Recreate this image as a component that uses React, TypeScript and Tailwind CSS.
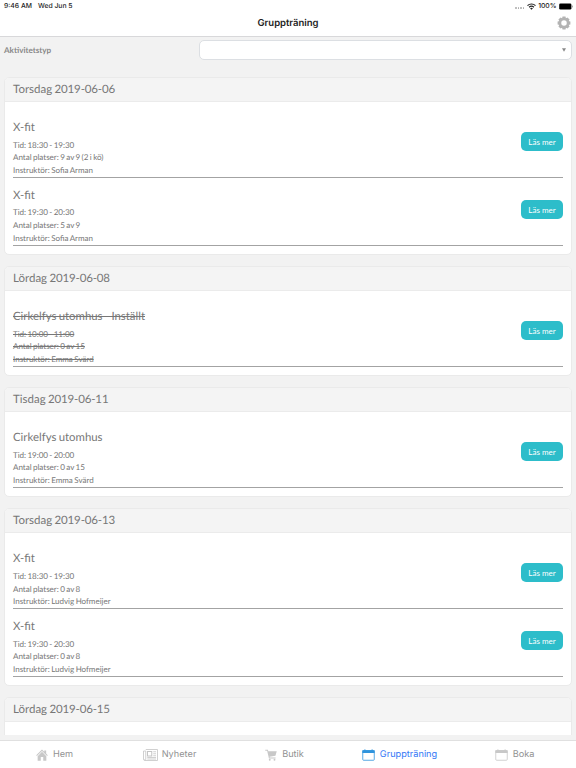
import React from "react";

interface Activity {
  name: string;
  time: string;
  spots: string;
  instructor: string;
  cancelled?: boolean;
}

interface Day {
  title: string;
  items: Activity[];
}

const days: Day[] = [
  {
    title: "Torsdag 2019-06-06",
    items: [
      { name: "X-fit", time: "18:30 - 19:30", spots: "9 av 9 (2 i kö)", instructor: "Sofia Arman" },
      { name: "X-fit", time: "19:30 - 20:30", spots: "5 av 9", instructor: "Sofia Arman" },
    ],
  },
  {
    title: "Lördag 2019-06-08",
    items: [
      { name: "Cirkelfys utomhus - Inställt", time: "10:00 - 11:00", spots: "0 av 15", instructor: "Emma Svärd", cancelled: true },
    ],
  },
  {
    title: "Tisdag 2019-06-11",
    items: [{ name: "Cirkelfys utomhus", time: "19:00 - 20:00", spots: "0 av 15", instructor: "Emma Svärd" }],
  },
  {
    title: "Torsdag 2019-06-13",
    items: [
      { name: "X-fit", time: "18:30 - 19:30", spots: "0 av 8", instructor: "Ludvig Hofmeijer" },
      { name: "X-fit", time: "19:30 - 20:30", spots: "0 av 8", instructor: "Ludvig Hofmeijer" },
    ],
  },
  { title: "Lördag 2019-06-15", items: [] },
];

function WifiIcon() {
  return (
    <svg width="9" height="7" viewBox="0 0 18 14" fill="none" stroke="#222" strokeWidth="2.4">
      <path d="M1 5.2a11.5 11.5 0 0 1 16 0" />
      <path d="M4.2 8.4a7 7 0 0 1 9.6 0" />
      <path d="M9 13.6 6.2 10.8a4 4 0 0 1 5.6 0Z" fill="#222" stroke="none" />
    </svg>
  );
}

function BatteryIcon() {
  return (
    <svg width="14" height="7" viewBox="0 0 14 7">
      <rect x="0.2" y="0.5" width="12.2" height="6" rx="1.3" fill="#000" />
      <path d="M13 2.3c.9.3.9 2.1 0 2.4Z" fill="#777" />
    </svg>
  );
}

function GearIcon() {
  return (
    <svg width="14" height="14" viewBox="-14 -14 28 28" fill="#b3b3b3">
      {[0, 45, 90, 135].map((angle) => (
        <path key={angle} d="M-4-8.5 -3-12.8h6l1 4.3ZM-4 8.5l1 4.3h6l1-4.3Z" transform={`rotate(${angle})`} />
      ))}
      <circle r="8" fill="none" stroke="#b3b3b3" strokeWidth="5" />
    </svg>
  );
}

function HomeIcon() {
  return (
    <svg width="12" height="12" viewBox="0 0 24 24" fill="#c8c8c8">
      <path d="M12 .8 16.5 5.3V2.8h3.8v6.3l3.3 3.3-1.5 1.5L12 3.8 1.9 13.9.4 12.4Z" />
      <path d="M12 5.6 20.7 14.3V23.4h-6.2v-7.2h-5v7.2H3.3v-9.1Z" />
    </svg>
  );
}

function NewsIcon() {
  return (
    <svg width="15" height="12" viewBox="0 0 30 24" fill="none" stroke="#c4c4c4" strokeWidth="1.6">
      <path d="M5.5 1h23.5v22H4a3 3 0 0 1-3-3V4h4.5v16a1.5 1.5 0 0 1-3 1" />
      <rect x="9" y="5" width="8.5" height="9" strokeWidth="2" />
      <path d="M20.5 5.5h5.5M20.5 9.5h5.5M20.5 13.5h5.5M8.5 17h17.5M8.5 20h17.5" />
    </svg>
  );
}

function CartIcon() {
  return (
    <svg width="12" height="12" viewBox="0 0 24 24" fill="#c8c8c8">
      <path d="M.5 1.5h5.3l.8 2.8h16.9l-2.6 9.2L9 15.3l.4 1.6h11.8v1.9H7.9L4.3 3.4H.5Z" />
      <circle cx="9.5" cy="21.4" r="1.9" />
      <circle cx="19" cy="21.4" r="1.9" />
    </svg>
  );
}

function CalendarIcon({ color }: { color: string }) {
  return (
    <svg width="13" height="12" viewBox="0 0 26 24" fill={color}>
      <rect x="1.5" y="3" width="23" height="19.5" rx="1.5" fill="none" stroke={color} strokeWidth="1.6" />
      <path d="M.7 2.5H4.5V.8H7v1.7h12V.8h2.5v1.7h3.8V8H.7Z" />
    </svg>
  );
}

function ActivityRow({ item }: { item: Activity }) {
  return (
    <div className="flex h-[67.8px] items-center justify-between border-b border-[#a3a3a3]">
      <div className={`pt-[9px] ${item.cancelled ? "line-through" : ""}`}>
        {/* no letter spacing here, it would break the fi ligature */}
        <h3 className="text-[11.4px] leading-[18px]">{item.name}</h3>
        <div className="pt-[1.5px] text-[8.1px] leading-[12.7px]">
          <p className="tracking-[-0.06px]">Tid: {item.time}</p>
          <p className="tracking-[-0.04px]">Antal platser: {item.spots}</p>
          <p className="text-[8px]">Instruktör: {item.instructor}</p>
        </div>
      </div>
      <button className="mb-[4px] h-[19px] w-[42px] rounded-[5px] bg-[#2dbdca] pt-px text-[8px] text-white">Läs mer</button>
    </div>
  );
}

function DayCard({ day }: { day: Day }) {
  const [weekday, date] = day.title.split(" ");
  return (
    <section className="mb-[11.2px] overflow-hidden rounded-[5px] border border-[#eaeaea] bg-white">
      <h2 className="h-[24px] border-b border-[#ebebeb] bg-[#f4f4f4] px-2 text-[11.5px] leading-[23px]">
        {weekday} <span className="tracking-[-0.15px]">{date}</span>
      </h2>
      <div className="min-h-[40px] px-2 pt-[8px] pb-[8.2px]">
        {day.items.map((item) => (
          <ActivityRow key={item.time} item={item} />
        ))}
      </div>
    </section>
  );
}

export default function App() {
  return (
    <div className="flex h-[768px] w-[576px] flex-col overflow-hidden bg-[#f2f2f2] font-[Lato,sans-serif] text-[#777] [text-rendering:geometricPrecision]">
      <header className="h-[37px] shrink-0 border-b border-[#d8d8da] bg-white font-[Inter,sans-serif] text-[#222]">
        <div className="flex h-3 items-center justify-between pr-[3px] pl-1 text-[6.8px] font-medium">
          <div className="flex gap-[6px]">
            <span>9:46 AM</span>
            <span>Wed Jun 5</span>
          </div>
          <div className="flex items-center gap-[2.5px]">
            <span className="flex gap-[1px] pt-[4px]">
              {[0, 1, 2, 3].map((dot) => (
                <i key={dot} className="size-[1.5px] rounded-full bg-[#aaa]" />
              ))}
            </span>
            <WifiIcon />
            <span>100%</span>
            <BatteryIcon />
          </div>
        </div>
        <div className="grid h-[22px] grid-cols-[1fr_auto_1fr] items-center">
          <span />
          <h1 className="pt-[3px] text-[9.5px] font-semibold">Gruppträning</h1>
          <span className="flex justify-end pr-[5px]">
            <GearIcon />
          </span>
        </div>
      </header>

      <div className="flex h-[40px] shrink-0 items-start pr-1 pl-1">
        <label className="w-[195px] pt-[7px] text-[8.1px] leading-[13px] font-bold text-[#888]">Aktivitetstyp</label>
        <div className="mt-[3px] flex h-5 flex-1 items-center justify-end rounded-[5px] border border-[#dcdfe3] bg-white pr-[5px]">
          <svg width="4" height="4" viewBox="0 0 4 4">
            <path d="M0 .3h4L2 3.8Z" fill="#888" />
          </svg>
        </div>
      </div>

      <main className="h-[658px] shrink-0 overflow-hidden px-1 [word-spacing:-0.6px]">
        {days.map((day) => (
          <DayCard key={day.title} day={day} />
        ))}
      </main>

      <nav className="mt-[5px] h-[28px] shrink-0 border-t border-[#e0e0e0] bg-white font-[Inter,sans-serif] text-[9.2px] text-[#929292]">
        <div className="-ml-[3px] grid h-full w-[575px] grid-cols-5">
          <div className="flex items-center justify-center gap-[5px]">
            <HomeIcon />
            <span>Hem</span>
          </div>
          <div className="flex items-center justify-center gap-[4px]">
            <NewsIcon />
            <span>Nyheter</span>
          </div>
          <div className="flex items-center justify-center gap-[5px]">
            <CartIcon />
            <span>Butik</span>
          </div>
          <div className="flex items-center justify-center gap-[5px] text-[#3478f6]">
            <CalendarIcon color="#2f94dd" />
            <span>Gruppträning</span>
          </div>
          <div className="flex items-center justify-center gap-[5px]">
            <CalendarIcon color="#c8c8c8" />
            <span>Boka</span>
          </div>
        </div>
      </nav>
    </div>
  );
}
